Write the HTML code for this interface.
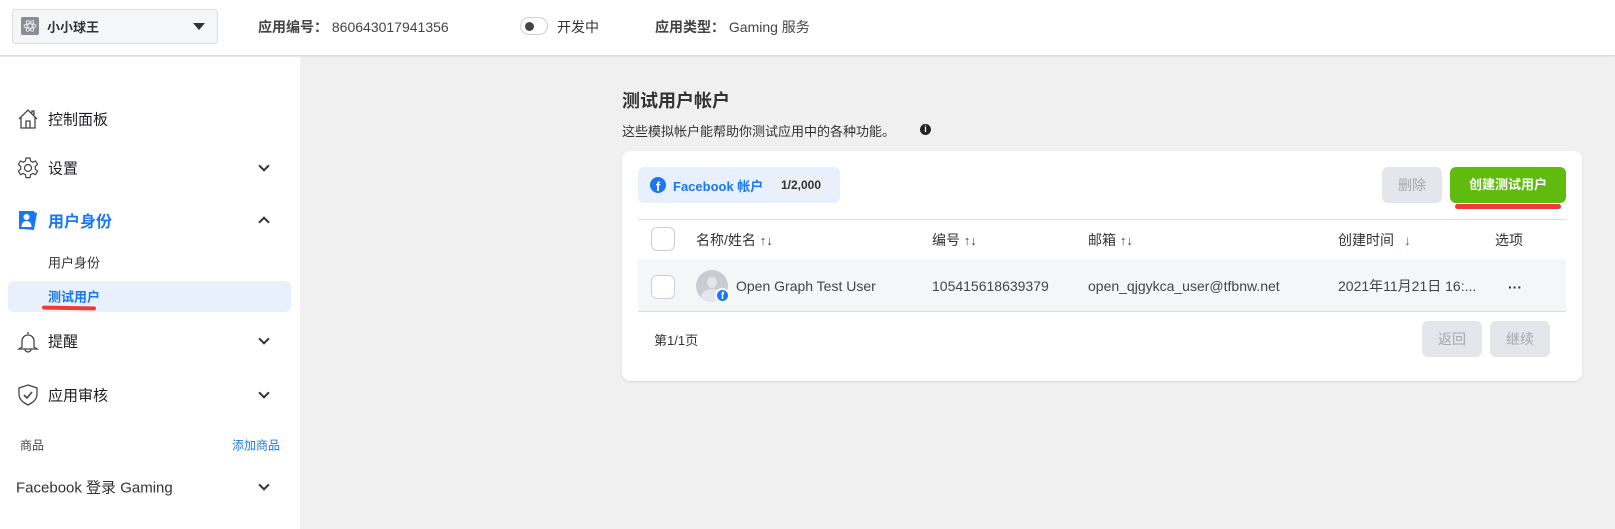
<!DOCTYPE html>
<html><head><meta charset="utf-8"><style>
*{margin:0;padding:0;box-sizing:border-box}
body{width:1615px;height:529px;background:#f0f0f0;font-family:"Liberation Sans","Noto Sans CJK SC",sans-serif;color:#1c1e21;position:relative;overflow:hidden;font-size:14px}
.a{position:absolute;white-space:nowrap}
.hdr{left:0;top:0;width:1615px;height:56px;background:#fff;border-bottom:1px solid #ddd;box-shadow:0 1px 2px rgba(0,0,0,.06)}
.side{left:0;top:57px;width:300px;height:472px;background:#fff}
.nav{font-size:15px;color:#1c1e21;transform:translateY(-50%)}
.chev{width:8px;height:8px;border-right:2px solid #333;border-bottom:2px solid #333;transform:rotate(45deg)}
.card{left:622px;top:151px;width:960px;height:230px;background:#fff;border-radius:8px;box-shadow:0 1px 2px rgba(0,0,0,.1)}
.cb{width:24px;height:24px;border:1px solid #ccd0d5;border-radius:6px;background:#fff}
.btn{background:#e4e6eb;border-radius:6px;color:#a5a8ad;font-size:14px;text-align:center}
.sort{color:#444;font-size:13px}
</style></head><body>
<div class="a hdr"></div>
<div class="a" style="left:12px;top:9px;width:206px;height:35px;background:#f5f6f7;border:1px solid #dadde1;border-radius:3px"></div>
<div class="a" style="left:21px;top:17px;width:18px;height:18px;background:#8a8d91;border-radius:2px"><svg width="18" height="18" viewBox="0 0 18 18"><g fill="none" stroke="#e4e6eb" stroke-width="1"><ellipse cx="9" cy="9" rx="6" ry="2.3"/><ellipse cx="9" cy="9" rx="6" ry="2.3" transform="rotate(60 9 9)"/><ellipse cx="9" cy="9" rx="6" ry="2.3" transform="rotate(-60 9 9)"/></g></svg></div>
<div class="a" style="left:47px;top:17px;font-size:13px;font-weight:bold;color:#333">小小球王</div>
<div class="a" style="left:193px;top:23px;width:0;height:0;border-left:6px solid transparent;border-right:6px solid transparent;border-top:7px solid #333"></div>
<div class="a" style="left:258px;top:17px;font-size:14px;color:#444"><b>应用编号：</b> 860643017941356</div>
<div class="a" style="left:520px;top:17px;width:28px;height:18px;border:1px solid #ccd0d5;border-radius:9px;background:#fff"><div style="position:absolute;left:4px;top:4px;width:9px;height:9px;border-radius:50%;background:#444"></div></div>
<div class="a" style="left:557px;top:17px;font-size:14px;color:#333">开发中</div>
<div class="a" style="left:655px;top:17px;font-size:14px;color:#444"><b>应用类型：</b> Gaming 服务</div>

<div class="a side"></div>
<svg class="a" style="left:17px;top:108px" width="22" height="22" viewBox="0 0 22 22" fill="none" stroke="#444" stroke-width="1.3"><path d="M2 11 L11 2 L20 11 M4 9 V20 H18 V9 M9 20 V13 H13 V20 M15 5 V3 H17 V7"/></svg>
<div class="a nav" style="left:48px;top:119px">控制面板</div>
<svg class="a" style="left:16px;top:156px" width="24" height="24" viewBox="0 0 24 24" fill="none" stroke="#444" stroke-width="1.2"><path d="M10 2h4l.6 3 2.2 1.2 2.8-1.2 2 3.4-2.3 2v2.8l2.3 2-2 3.4-2.8-1.2-2.2 1.2-.6 3h-4l-.6-3-2.2-1.2-2.8 1.2-2-3.4 2.3-2v-2.8l-2.3-2 2-3.4 2.8 1.2 2.2-1.2z"/><circle cx="12" cy="12" r="3.5"/></svg>
<div class="a nav" style="left:48px;top:168px">设置</div>
<div class="a chev" style="left:260px;top:162px"></div>
<svg class="a" style="left:17px;top:208px" width="22" height="24" viewBox="0 0 22 24"><path d="M2 3h15v18H2z" fill="#1877f2"/><path d="M17 4l3 1-3 17H5l12-1z" fill="#1877f2"/><circle cx="9.5" cy="9" r="3" fill="#fff"/><path d="M4.5 19c0-4 2-6 5-6s5 2 5 6z" fill="#fff"/></svg>
<div class="a nav" style="left:48px;top:220px;color:#1877f2;font-weight:bold;font-size:16px">用户身份</div>
<div class="a chev" style="left:260px;top:218px;transform:rotate(225deg)"></div>
<div class="a nav" style="left:48px;top:262px;font-size:13px;color:#333">用户身份</div>
<div class="a" style="left:8px;top:281px;width:283px;height:31px;background:#e7f0fc;border-radius:6px"></div>
<div class="a nav" style="left:48px;top:296px;font-size:13px;color:#1877f2;font-weight:bold">测试用户</div>
<div class="a" style="left:42px;top:306px;width:54px;height:4px;background:#f03a3a;border-radius:2px;transform:rotate(1deg)"></div>
<svg class="a" style="left:17px;top:330px" width="22" height="24" viewBox="0 0 22 24" fill="none" stroke="#444" stroke-width="1.3"><path d="M11 2v2M5 17V11a6 6 0 0 1 12 0v6l3 2H2z M8 19a3 3 0 0 0 6 0"/></svg>
<div class="a nav" style="left:48px;top:341px">提醒</div>
<div class="a chev" style="left:260px;top:335px"></div>
<svg class="a" style="left:17px;top:383px" width="22" height="24" viewBox="0 0 22 24" fill="none" stroke="#444" stroke-width="1.3"><path d="M11 2 L20 5 V11 C20 17 15 20 11 22 C7 20 2 17 2 11 V5 Z"/><path d="M7 12 L10 15 L15 9" stroke-width="1.6"/></svg>
<div class="a nav" style="left:48px;top:395px">应用审核</div>
<div class="a chev" style="left:260px;top:389px"></div>
<div class="a nav" style="left:20px;top:445px;font-size:12px;color:#444">商品</div>
<div class="a nav" style="left:232px;top:445px;font-size:12px;color:#1877f2">添加商品</div>
<div class="a nav" style="left:16px;top:487px;font-size:15px;color:#333">Facebook 登录 Gaming</div>
<div class="a chev" style="left:260px;top:481px"></div>

<div class="a" style="left:622px;top:87px;font-size:18px;font-weight:bold;color:#333">测试用户帐户</div>
<div class="a" style="left:622px;top:121px;font-size:13px;color:#333">这些模拟帐户能帮助你测试应用中的各种功能。</div>
<div class="a" style="left:920px;top:124px;width:11px;height:11px;border-radius:50%;background:#222;color:#fff;font-size:9px;font-weight:bold;text-align:center;line-height:11px">i</div>

<div class="a card"></div>
<div class="a" style="left:638px;top:167px;width:202px;height:36px;background:#e7f0fc;border-radius:6px"></div>
<div class="a" style="left:650px;top:177px;width:16px;height:16px;border-radius:50%;background:#1877f2;color:#fff;font-weight:bold;font-size:13px;text-align:center;line-height:19px;overflow:hidden">f</div>
<div class="a" style="left:673px;top:176px;font-size:13px;font-weight:bold;color:#1877f2">Facebook 帐户</div>
<div class="a" style="left:774px;top:176px;width:54px;height:19px;border-radius:10px;background:#eceff3;font-size:12px;font-weight:bold;color:#333;text-align:center;line-height:19px">1/2,000</div>
<div class="a btn" style="left:1382px;top:167px;width:60px;height:36px;line-height:36px">删除</div>
<div class="a" style="left:1450px;top:167px;width:116px;height:36px;background:#5fbc0e;border-radius:6px;color:#fff;font-weight:bold;font-size:13px;text-align:center;line-height:36px">创建测试用户</div>
<div class="a" style="left:1455px;top:204px;width:106px;height:5px;background:#f03a3a;border-radius:3px"></div>
<div class="a" style="left:638px;top:219px;width:928px;height:1px;background:#dadde1"></div>
<div class="a" style="left:638px;top:259px;width:928px;height:53px;background:#f5f6f7;border-bottom:1px solid #dadde1"></div>
<div class="a cb" style="left:651px;top:227px"></div>
<div class="a cb" style="left:651px;top:275px"></div>
<div class="a" style="left:696px;top:230px;color:#333">名称/姓名 <span class="sort">↑↓</span></div>
<div class="a" style="left:932px;top:230px;color:#333">编号 <span class="sort">↑↓</span></div>
<div class="a" style="left:1088px;top:230px;color:#333">邮箱 <span class="sort">↑↓</span></div>
<div class="a" style="left:1338px;top:230px;color:#333">创建时间 <span style="color:#1877f2;margin-left:6px">↓</span></div>
<div class="a" style="left:1495px;top:230px;color:#333">选项</div>
<div class="a" style="left:696px;top:270px;width:32px;height:32px;border-radius:50%;background:#c9ccd1;overflow:hidden"><div style="position:absolute;left:11px;top:7px;width:10px;height:11px;border-radius:50%;background:#e4e6eb"></div><div style="position:absolute;left:5px;top:19px;width:22px;height:16px;border-radius:50%;background:#e4e6eb"></div></div>
<div class="a" style="left:715px;top:288px;width:15px;height:15px;border-radius:50%;background:#1877f2;border:2px solid #fff;color:#fff;font-size:10px;font-weight:bold;text-align:center;line-height:14px">f</div>
<div class="a" style="left:736px;top:278px;color:#444">Open Graph Test User</div>
<div class="a" style="left:932px;top:278px;color:#444">105415618639379</div>
<div class="a" style="left:1088px;top:278px;color:#444">open_qjgykca_user@tfbnw.net</div>
<div class="a" style="left:1338px;top:278px;color:#444;line-height:16px">2021年11月21日 16:...</div>
<div class="a" style="left:1508px;top:279px;font-weight:bold;color:#333">···</div>
<div class="a" style="left:654px;top:330px;font-size:13px;color:#333">第1/1页</div>
<div class="a btn" style="left:1422px;top:321px;width:60px;height:36px;line-height:36px">返回</div>
<div class="a btn" style="left:1490px;top:321px;width:60px;height:36px;line-height:36px">继续</div>
</body></html>
